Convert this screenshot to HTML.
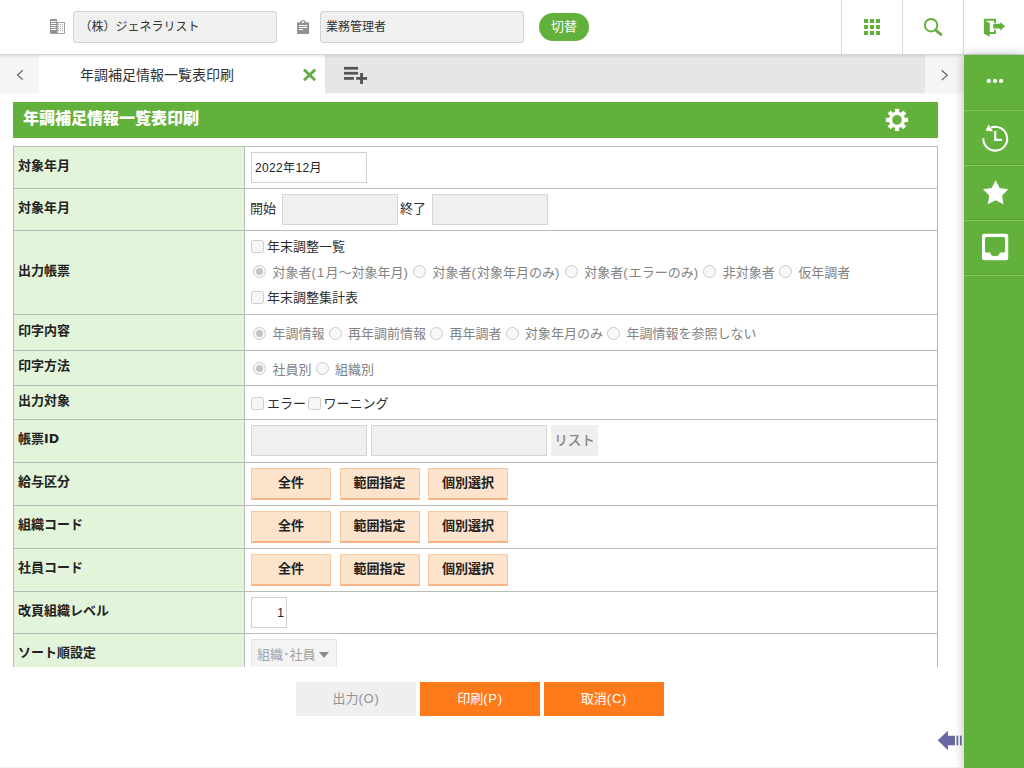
<!DOCTYPE html>
<html lang="ja">
<head>
<meta charset="utf-8">
<title>年調補足情報一覧表印刷</title>
<style>
*{box-sizing:border-box;margin:0;padding:0}
html,body{width:1024px;height:768px;overflow:hidden;background:#fff}
body{font-family:"Liberation Sans","Noto Sans CJK JP",sans-serif;font-size:13px;color:#222;position:relative}
.abs{position:absolute}
i{font-style:normal;letter-spacing:1.2px}
.bb i{letter-spacing:.8px}
/* header */
#hdr{position:absolute;left:0;top:0;width:1024px;height:55px;background:#fff;border-bottom:1px solid #d6d6d6;box-shadow:0 1px 3px rgba(0,0,0,.12);z-index:5}
.hin{position:absolute;top:11px;height:32px;background:#f0f0f0;border:1px solid #d2d2d2;border-radius:3px;font-size:12px;line-height:31px;color:#333;white-space:nowrap}
#sw{position:absolute;left:539px;top:13px;width:50px;height:28px;border-radius:14px;background:#62b13c;color:#fff;font-size:13px;line-height:27px;text-align:center}
.vsep{position:absolute;top:0;width:1px;height:54px;background:#d9d9d9}
/* tab bar */
#tabbar{position:absolute;left:0;top:55px;width:964px;height:38px;background:#e6e6e6;border-bottom:1px solid #f2f2f2;box-sizing:content-box}
#tabl{position:absolute;left:0;top:0;width:39px;height:38px;background:#f5f5f5;border-bottom:1px solid #fafafa;box-sizing:content-box}
#tabr{position:absolute;left:925px;top:0;width:39px;height:38px;background:#f5f5f5;border-bottom:1px solid #fafafa;box-sizing:content-box}
#tab1{position:absolute;left:39px;top:0;width:286px;height:39px;background:#fff;font-size:14px;line-height:40px;color:#333}
#tab1 span{position:absolute;left:41px;top:0;white-space:nowrap}
/* sidebar */
#side{position:absolute;left:964px;top:55px;width:60px;height:713px;background:#62b13c;box-shadow:0 0 10px rgba(0,0,0,.27);z-index:6}
#side .ln{position:absolute;left:0;width:60px;height:2px;background:#5aa636;border-bottom:1px solid #84c564}
/* title */
#ttl{position:absolute;left:13px;top:102px;width:925px;height:36px;background:#62b13c;color:#fff;font-weight:900;font-size:16px;line-height:33px;padding-left:10px}
/* table */
#clip{position:absolute;left:13px;top:146px;width:926px;height:521px;overflow:hidden}
table{border-collapse:collapse;width:925px;table-layout:fixed}
td{border:1px solid #b9bbb9;vertical-align:middle;font-size:13px}
td.l{width:231px;background:#e2f4d9;font-weight:bold;padding-left:4px;padding-bottom:7px;color:#222}
td.v{padding-left:5px;color:#2e2e2e;white-space:nowrap}
.inp{display:inline-block;vertical-align:middle;height:31px;border:1px solid #d0d0d0;background:#fff;line-height:29px;font-size:12px;padding-left:3px;color:#222}
.inp.d{background:#f0f0f0;border-color:#d6d6d6}
.cb{display:inline-block;vertical-align:middle;width:13px;height:13px;border:1px solid #cecece;border-radius:2.500px;background:#f6f6f6;margin:0 3px 0 1px;position:relative;top:-1px}
.rd{display:inline-block;vertical-align:middle;width:13px;height:13px;border:1px solid #c9c9c9;border-radius:50%;background:#f8f8f8;margin:0 6.500px 0 3px;position:relative;top:-1.500px}
.rd.on:after{content:"";position:absolute;left:2px;top:2px;width:7px;height:7px;border-radius:50%;background:#c4c4c4}
.g,td.v.g{color:#828282}
.g b{font-weight:normal;margin-right:1px}
.ob{display:inline-block;vertical-align:middle;width:80px;height:32px;background:#fde3cb;border:1px solid #f9c9a0;border-bottom:2px solid #f7b585;font-weight:bold;font-size:13px;line-height:28px;text-align:center;color:#222;margin-right:8.500px;position:relative;top:-.500px}
.bb{position:absolute;top:682px;width:120px;height:34px;font-size:13px;line-height:33px;text-align:center}
</style>
</head>
<body>
<div id="hdr">
  <svg class="abs" style="left:44px;top:14px" width="28" height="26" viewBox="0 0 827 768"><rect x="180" y="150" width="200" height="435" fill="#8e8e8e"/><g fill="#fff"><rect x="205" y="205" width="150" height="30"/><rect x="205" y="265" width="150" height="30"/><rect x="205" y="325" width="150" height="30"/><rect x="205" y="385" width="150" height="30"/><rect x="205" y="445" width="150" height="30"/></g><rect x="392" y="252" width="211" height="321" fill="#fff" stroke="#8e8e8e" stroke-width="25"/><g fill="#8e8e8e"><rect x="415" y="297" width="26" height="26"/><rect x="474" y="297" width="26" height="26"/><rect x="533" y="297" width="26" height="26"/><rect x="415" y="357" width="26" height="26"/><rect x="474" y="357" width="26" height="26"/><rect x="533" y="357" width="26" height="26"/><rect x="415" y="415" width="26" height="26"/><rect x="474" y="415" width="26" height="26"/><rect x="533" y="415" width="26" height="26"/><rect x="415" y="475" width="26" height="26"/><rect x="474" y="475" width="26" height="26"/><rect x="533" y="475" width="26" height="26"/></g></svg>
  <div class="hin" style="left:73px;width:204px;padding-left:5.500px">（株）ジェネラリスト</div>
  <svg class="abs" style="left:288px;top:12px" width="30" height="30" viewBox="0 0 768 768"><path d="M244 260h70q8-55 70-55t70 55h74a12 12 0 0 1 12 12v276a12 12 0 0 1-12 12h-284a12 12 0 0 1-12-12v-276a12 12 0 0 1 12-12z" fill="#929292"/><g fill="#fff"><rect x="360" y="234" width="48" height="42"/><rect x="280" y="334" width="210" height="25"/><rect x="280" y="385" width="210" height="25"/><rect x="280" y="436" width="105" height="25"/></g></svg>
  <div class="hin" style="left:320px;width:204px;padding-left:5px">業務管理者</div>
  <div id="sw">切替</div>
  <div class="vsep" style="left:841px"></div>
  <div class="vsep" style="left:902px"></div>
  <div class="vsep" style="left:963px"></div>
  <svg class="abs" style="left:864px;top:19px" width="16" height="16" viewBox="0 0 16 16" fill="#62b13c"><rect x="0" y="0" width="4" height="4"/><rect x="6" y="0" width="4" height="4"/><rect x="12" y="0" width="4" height="4"/><rect x="0" y="6" width="4" height="4"/><rect x="6" y="6" width="4" height="4"/><rect x="12" y="6" width="4" height="4"/><rect x="0" y="12" width="4" height="4"/><rect x="6" y="12" width="4" height="4"/><rect x="12" y="12" width="4" height="4"/></svg>
  <svg class="abs" style="left:842px;top:0" width="120" height="60" viewBox="0 0 1024 512"><circle cx="760" cy="215" r="53.500" fill="none" stroke="#62b13c" stroke-width="17"/><path d="M805 262L843 294" stroke="#62b13c" stroke-width="25" stroke-linecap="round"/></svg>
  <svg class="abs" style="left:964px;top:0" width="60" height="54" viewBox="0 0 768 691" fill="#62b13c"><path d="M255 240h155v57h-25v-32h-115l60 28v117h55v-30h25v55h-80v35l-75-38z"/><path d="M375 305h90v-25l60 55-60 60v-30h-90z"/></svg>
</div>
<div id="tabbar">
  <div id="tabl"><svg class="abs" style="left:0;top:0" width="60" height="40" viewBox="0 0 1024 683"><path d="M390 260L298 340l92 80" fill="none" stroke="#666" stroke-width="21"/></svg></div>
  <div id="tab1"><span>年調補足情報一覧表印刷</span></div>
  <svg class="abs" style="left:290px;top:0" width="100" height="40" viewBox="0 0 1024 410"><path d="M143 150L258 258M258 150L143 258" stroke="#6aaa4e" stroke-width="29"/><g fill="#555"><rect x="553" y="122" width="144" height="28"/><rect x="553" y="173" width="144" height="28"/><rect x="553" y="226" width="102" height="28"/><rect x="678" y="226" width="112" height="28"/><rect x="718" y="185" width="30" height="112"/></g></svg>
  <div id="tabr"><svg class="abs" style="left:0;top:0" width="39" height="38" viewBox="0 0 39 38"><path d="M16.700 15.300l5.500 4.900-5.500 4.900" fill="none" stroke="#666" stroke-width="1.250"/></svg></div>
</div>
<div id="side">
  <div class="ln" style="top:54px"></div><div class="ln" style="top:109px"></div><div class="ln" style="top:164px"></div><div class="ln" style="top:219px"></div>
  <svg class="abs" style="left:0;top:0" width="60" height="60" viewBox="0 0 60 60" fill="#fff"><circle cx="24.800" cy="25.900" r="2.100"/><circle cx="31" cy="25.900" r="2.100"/><circle cx="37.100" cy="25.900" r="2.100"/></svg>
  <svg class="abs" style="left:0;top:45px" width="60" height="60" viewBox="0 0 768 768"><path d="M345 352A153 153 0 1 1 247 490" fill="none" stroke="#fff" stroke-width="26"/><path d="M275 390L315 315L372 402z" fill="#fff"/><path d="M400 398v112h86" fill="none" stroke="#fff" stroke-width="28"/></svg>
  <svg class="abs" style="left:0;top:105px" width="60" height="60" viewBox="0 0 768 768"><path d="M405 258L456 358L567 375L487 455L505 566L405 514L305 566L323 455L243 375L354 358z" fill="#fff"/></svg>
  <svg class="abs" style="left:0;top:160px" width="60" height="60" viewBox="0 0 768 768"><path fill-rule="evenodd" fill="#fff" d="M262 240h272a32 32 0 0 1 32 32v276a32 32 0 0 1-32 32h-272a32 32 0 0 1-32-32v-276a32 32 0 0 1 32-32zM290 282a22 22 0 0 0-22 22v160a16 16 0 0 0 16 16h50a64 58 0 0 0 126 0h50a16 16 0 0 0 16-16v-160a22 22 0 0 0-22-22z"/></svg>
</div>
<div id="ttl">年調補足情報一覧表印刷
  <svg class="abs" style="left:859px;top:-2px" width="80" height="50" viewBox="0 0 1024 640"><g fill="#fff"><circle cx="320" cy="255" r="104"/><rect x="293" y="113" width="54" height="284"/><rect x="293" y="113" width="54" height="284" transform="rotate(45 320 255)"/><rect x="293" y="113" width="54" height="284" transform="rotate(90 320 255)"/><rect x="293" y="113" width="54" height="284" transform="rotate(135 320 255)"/></g><circle cx="320" cy="255" r="62" fill="#62b13c"/></svg>
</div>
<div id="clip">
<table>
<tr style="height:42px"><td class="l">対象年月</td><td class="v"><span class="inp" style="width:116px;margin-left:1px;letter-spacing:.350px;line-height:31px">2022年12月</span></td></tr>
<tr style="height:42px"><td class="l">対象年月</td><td class="v">開始<span class="inp d" style="width:116px;margin:0 2px 0 6px"></span>終了<span class="inp d" style="width:116px;margin:0 2px 0 6px"></span></td></tr>
<tr style="height:84px"><td class="l">出力帳票</td><td class="v" style="line-height:25.500px"><span class="cb"></span>年末調整一覧<br><span class="g"><span class="rd on"></span><b>対象者<i>(1</i>月～対象年月<i>)</i></b><span class="rd"></span><b>対象者<i>(</i>対象年月のみ<i>)</i></b><span class="rd"></span><b>対象者<i>(</i>エラーのみ<i>)</i></b><span class="rd"></span><b>非対象者</b><span class="rd"></span><b>仮年調者</b></span><br><span class="cb"></span>年末調整集計表</td></tr>
<tr style="height:36px"><td class="l">印字内容</td><td class="v g"><span class="rd on"></span><b>年調情報</b><span class="rd"></span><b>再年調前情報</b><span class="rd"></span><b>再年調者</b><span class="rd"></span><b>対象年月のみ</b><span class="rd"></span><b>年調情報を参照しない</b></td></tr>
<tr style="height:35px"><td class="l">印字方法</td><td class="v g"><span class="rd on"></span><b>社員別</b><span class="rd"></span><b>組織別</b></td></tr>
<tr style="height:34px"><td class="l">出力対象</td><td class="v"><span class="cb"></span>エラー<span class="cb" style="margin-left:1.500px"></span>ワーニング</td></tr>
<tr style="height:43px"><td class="l">帳票<span style="font-family:'DejaVu Sans','Liberation Sans',sans-serif;font-size:12.500px">ID</span></td><td class="v"><span style="position:relative;top:-1px"><span class="inp d" style="width:116px;margin-left:1px"></span><span class="inp d" style="width:176px;margin-left:4px"></span><span style="display:inline-block;vertical-align:middle;width:47px;height:31px;margin-left:4px;background:#efefef;color:#858585;font-weight:500;font-size:13.500px;line-height:32px;text-align:center">リスト</span></span></td></tr>
<tr style="height:43px"><td class="l">給与区分</td><td class="v"><span class="ob" style="margin-left:1px">全件</span><span class="ob">範囲指定</span><span class="ob">個別選択</span></td></tr>
<tr style="height:43px"><td class="l">組織コード</td><td class="v"><span class="ob" style="margin-left:1px">全件</span><span class="ob">範囲指定</span><span class="ob">個別選択</span></td></tr>
<tr style="height:43px"><td class="l">社員コード</td><td class="v"><span class="ob" style="margin-left:1px">全件</span><span class="ob">範囲指定</span><span class="ob">個別選択</span></td></tr>
<tr style="height:42px"><td class="l">改頁組織レベル</td><td class="v"><span class="inp" style="width:36px;margin-left:1px;text-align:right;padding-right:2px;line-height:31px">1</span></td></tr>
<tr style="height:42px"><td class="l">ソート順設定</td><td class="v"><span class="inp d" style="width:86px;margin-left:1px;font-size:13px;color:#a2a2a2;background:#f4f4f4;border-color:#e2e2e2;padding-left:5px">組織･社員<span style="display:inline-block;width:0;height:0;margin-left:3.500px;border:5.500px solid transparent;border-top:6.500px solid #8c8c8c;border-bottom:0;vertical-align:middle;position:relative;top:-1px"></span></span></td></tr>
</table>
</div>
<div class="bb" style="left:296px;background:#efefef;color:#929292">出力<i>(O)</i></div>
<div class="bb" style="left:420px;background:#ff7a1a;color:#fff">印刷<i>(P)</i></div>
<div class="bb" style="left:544px;background:#ff7a1a;color:#fff">取消<i>(C)</i></div>
<svg class="abs" style="left:864px;top:688px" width="100" height="80" viewBox="0 0 640 512" fill="#6868a0"><path d="M472 335l65-62v32h45v62h-45v32z"/><rect x="592" y="305" width="11" height="62"/><rect x="614" y="305" width="11" height="62"/></svg>
<div class="abs" style="left:0;top:767px;width:964px;height:1px;background:#f2f2f2"></div>
</body>
</html>
